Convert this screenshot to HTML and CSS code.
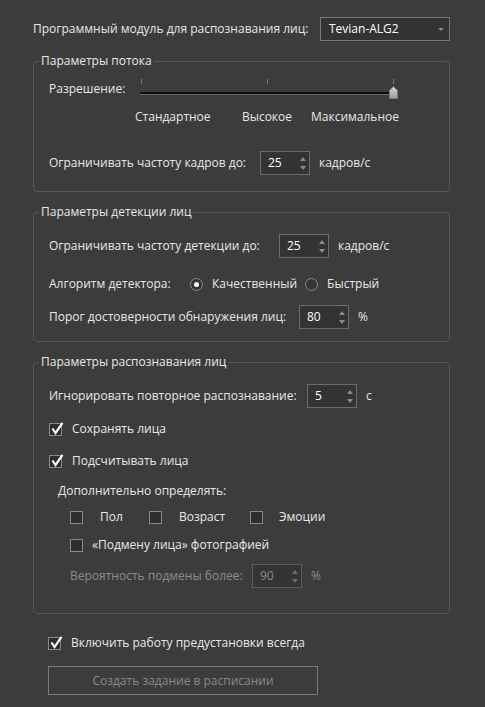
FILE: index.html
```html
<!DOCTYPE html>
<html lang="ru">
<head>
<meta charset="utf-8">
<title>Настройки</title>
<link rel="stylesheet" href="styles.css">
</head>
<body>
<div class="page">
  <div class="row top">
    <span class="lbl">Программный модуль для распознавания лиц:</span>
    <div class="combo"><span class="combo-text">Tevian-ALG2</span><span class="caret"></span></div>
  </div>

  <fieldset class="group g1">
    <legend>Параметры потока</legend>
    <div class="row res">
      <span class="lbl res-lbl">Разрешение:</span>
      <div class="slider">
        <div class="ticks"><i></i><i></i><i></i></div>
        <div class="groove"></div>
        <svg class="handle" width="9" height="13" viewBox="0 0 9 13">
          <defs>
            <linearGradient id="hg" x1="0" y1="0" x2="0" y2="1">
              <stop offset="0" stop-color="#d8d8d8"/>
              <stop offset="1" stop-color="#9a9a9a"/>
            </linearGradient>
          </defs>
          <path d="M4.5 0.5 L8.5 4.5 L8.5 12.5 L0.5 12.5 L0.5 4.5 Z" fill="url(#hg)" stroke="#7a7a7a" stroke-width="1"/>
        </svg>
      </div>
    </div>
    <div class="slider-labels">
      <span class="sl-left">Стандартное</span>
      <span class="sl-mid">Высокое</span>
      <span class="sl-right">Максимальное</span>
    </div>
    <div class="row spinrow g1-fps">
      <span class="lbl w211">Ограничивать частоту кадров до:</span>
      <div class="spin"><span class="val">25</span><span class="arrows"><i class="up"></i><i class="down"></i></span></div>
      <span class="unit">кадров/с</span>
    </div>
  </fieldset>

  <fieldset class="group g2">
    <legend>Параметры детекции лиц</legend>
    <div class="row spinrow g2-fps">
      <span class="lbl w230">Ограничивать частоту детекции до:</span>
      <div class="spin"><span class="val">25</span><span class="arrows"><i class="up"></i><i class="down"></i></span></div>
      <span class="unit">кадров/с</span>
    </div>
    <div class="row radiorow">
      <span class="lbl w141">Алгоритм детектора:</span>
      <span class="radio checked"></span><span class="radio-text r1">Качественный</span>
      <span class="radio"></span><span class="radio-text">Быстрый</span>
    </div>
    <div class="row spinrow g2-thr">
      <span class="lbl w250">Порог достоверности обнаружения лиц:</span>
      <div class="spin"><span class="val">80</span><span class="arrows"><i class="up"></i><i class="down"></i></span></div>
      <span class="unit">%</span>
    </div>
  </fieldset>

  <fieldset class="group g3">
    <legend>Параметры распознавания лиц</legend>
    <div class="row spinrow g3-ign">
      <span class="lbl w258">Игнорировать повторное распознавание:</span>
      <div class="spin"><span class="val">5</span><span class="arrows"><i class="up"></i><i class="down"></i></span></div>
      <span class="unit">с</span>
    </div>
    <div class="row checkrow c-save">
      <span class="cb checked"><svg class="tick" width="14" height="14" viewBox="0 0 14 14"><path d="M2.5 6.5 L5.5 11 L12.5 0.8" fill="none" stroke="#ffffff" stroke-width="2.2" stroke-linejoin="miter"/></svg></span>
      <span class="cb-text">Сохранять лица</span>
    </div>
    <div class="row checkrow c-count">
      <span class="cb checked"><svg class="tick" width="14" height="14" viewBox="0 0 14 14"><path d="M2.5 6.5 L5.5 11 L12.5 0.8" fill="none" stroke="#ffffff" stroke-width="2.2" stroke-linejoin="miter"/></svg></span>
      <span class="cb-text">Подсчитывать лица</span>
    </div>
    <div class="extra-title">Дополнительно определять:</div>
    <div class="attrs">
      <span class="attr"><span class="cb"></span><span class="attr-text">Пол</span></span>
      <span class="attr"><span class="cb"></span><span class="attr-text">Возраст</span></span>
      <span class="attr"><span class="cb"></span><span class="attr-text a3">Эмоции</span></span>
    </div>
    <div class="row checkrow c-spoof">
      <span class="cb"></span>
      <span class="cb-text spoof-text">«Подмену лица» фотографией</span>
    </div>
    <div class="row spinrow prob disabled">
      <span class="lbl w182">Вероятность подмены более:</span>
      <div class="spin"><span class="val">90</span><span class="arrows"><i class="up"></i><i class="down"></i></span></div>
      <span class="unit">%</span>
    </div>
  </fieldset>

  <div class="row checkrow c-always">
    <span class="cb checked"><svg class="tick" width="14" height="14" viewBox="0 0 14 14"><path d="M2.5 6.5 L5.5 11 L12.5 0.8" fill="none" stroke="#ffffff" stroke-width="2.2" stroke-linejoin="miter"/></svg></span>
    <span class="cb-text">Включить работу предустановки всегда</span>
  </div>
  <button class="btn" disabled>Создать задание в расписании</button>
</div>
</body>
</html>
```

FILE: styles.css
```css
html, body {
  margin: 0;
  padding: 0;
  background: #3c3c3c;
}
body {
  font-family: "Open Sans", "Noto Sans", "DejaVu Sans", sans-serif;
  font-size: 12px;
  line-height: 16px;
  color: #e8e8e8;
}
.page {
  width: 417px;
  padding: 17px 0 0 33px;
}
.row {
  display: flex;
  align-items: center;
}
.lbl { white-space: nowrap; flex: none; }

/* top combo */
.top { height: 24px; }
.combo {
  margin-left: auto;
  width: 130px;
  height: 24px;
  box-sizing: border-box;
  border: 1px solid #777777;
  background: #333333;
  display: flex;
  align-items: center;
  padding-left: 8px;
  position: relative;
  color: #ffffff;
}
.caret {
  position: absolute;
  right: 5px;
  top: 10px;
  width: 0; height: 0;
  border-left: 3px solid transparent;
  border-right: 3px solid transparent;
  border-top: 3px solid #8a8a8a;
}

/* groups */
.group {
  margin: 12px 0 0 0;
  padding: 0 0 0 15px;
  border: 1px solid #585858;
  border-radius: 4px;
  min-width: 0;
}
.group legend {
  margin-left: -10px;
  padding: 0 2px;
  line-height: 16px;
  color: #e8e8e8;
}

/* slider */
.res { margin-top: 9px; height: 22px; }
.res-lbl { width: 91px; }
.slider {
  position: relative;
  width: 257px;
  height: 22px;
}
.ticks {
  display: flex;
  justify-content: space-between;
  padding: 0 3px 0 1px;
  height: 5px;
  margin-top: 1px;
}
.ticks i {
  display: block;
  width: 1px;
  height: 5px;
  background: #7a7a7a;
}
.groove {
  margin-top: 8px;
  height: 2px;
  width: 253px;
  background: #0e0e0e;
  border-bottom: 1px solid #6a6a6a;
}
.handle {
  position: absolute;
  left: 249px;
  top: 8px;
}
.slider-labels {
  margin: 9px 0 0 86px;
  width: 264px;
  display: grid;
  grid-template-columns: 1fr 1fr 1fr;
  white-space: nowrap;
}
.sl-left { justify-self: start; }
.sl-mid { justify-self: center; }
.sl-right { justify-self: end; }

/* spin rows */
.spinrow { height: 24px; }
.w211 { width: 211px; }
.w230 { width: 230px; }
.w141 { width: 141px; }
.w250 { width: 250px; }
.w258 { width: 258px; }
.w182 { width: 182px; }
.spin {
  width: 50px;
  height: 24px;
  box-sizing: border-box;
  border: 1px solid #6c6c6c;
  background: #333333;
  display: flex;
  align-items: center;
  padding-left: 7px;
  color: #ffffff;
  flex: none;
}
.spin .val { flex: 1; }
.arrows {
  width: 12px;
  height: 22px;
  display: flex;
  flex-direction: column;
  justify-content: space-between;
  align-items: center;
  padding: 5px 0 4px;
  box-sizing: border-box;
}
.arrows i {
  display: block;
  width: 0; height: 0;
  border-left: 3px solid transparent;
  border-right: 3px solid transparent;
}
.arrows .up { border-bottom: 4px solid #8c8c8c; }
.arrows .down { border-top: 4px solid #8c8c8c; }
.unit { margin-left: 9px; }

.g1-fps { margin-top: 26px; margin-bottom: 16px; }

.g2-fps { margin-top: 14px; }
.radiorow { margin-top: 14px; height: 24px; }
.radio {
  width: 13px;
  height: 13px;
  box-sizing: border-box;
  border: 1px solid #8a8a8a;
  border-radius: 50%;
  background: #353535;
  flex: none;
  display: flex;
  align-items: center;
  justify-content: center;
}
.radio.checked::after {
  content: "";
  width: 5px;
  height: 5px;
  border-radius: 50%;
  background: #ffffff;
}
.radio-text { margin-left: 9px; }
.radio-text.r1 { margin-right: 8px; }
.g2-thr { margin-top: 9px; margin-bottom: 12px; }

/* checkboxes */
.g3-ign { margin-top: 14px; }
.checkrow { height: 16px; }
.cb {
  width: 13px;
  height: 13px;
  box-sizing: border-box;
  border: 1px solid #8a8a8a;
  background: #2e2e2e;
  flex: none;
  position: relative;
}
.cb .tick {
  position: absolute;
  left: 0px;
  top: -2px;
}
.cb-text { margin-left: 10px; }
.c-save { margin-top: 13px; }
.c-count { margin-top: 16px; }
.extra-title { margin: 14px 0 0 9px; }
.attrs {
  margin: 10px 0 0 21px;
  display: grid;
  grid-template-columns: 79px 101px auto;
  height: 16px;
}
.attr { display: flex; align-items: center; }
.attr-text { margin-left: 17px; }
.attr-text.a3 { margin-left: 16px; }
.c-spoof { margin: 12px 0 0 21px; }
.spoof-text { margin-left: 9px; }
.prob { margin: 11px 0 25px 21px; }
.disabled { color: #8c8c8c; }
.disabled .spin { color: #8c8c8c; border-color: #5e5e5e; }
.disabled .arrows .up { border-bottom-color: #6e6e6e; }
.disabled .arrows .down { border-top-color: #6e6e6e; }

.c-always { margin: 21px 0 0 15px; }
.btn {
  display: block;
  margin: 15px 0 0 15px;
  width: 270px;
  height: 29px;
  box-sizing: border-box;
  border: 1px solid #7a7a7a;
  background: #3c3c3c;
  color: #8a8a8a;
  font-family: inherit;
  font-size: 12px;
  padding: 0;
}
```
